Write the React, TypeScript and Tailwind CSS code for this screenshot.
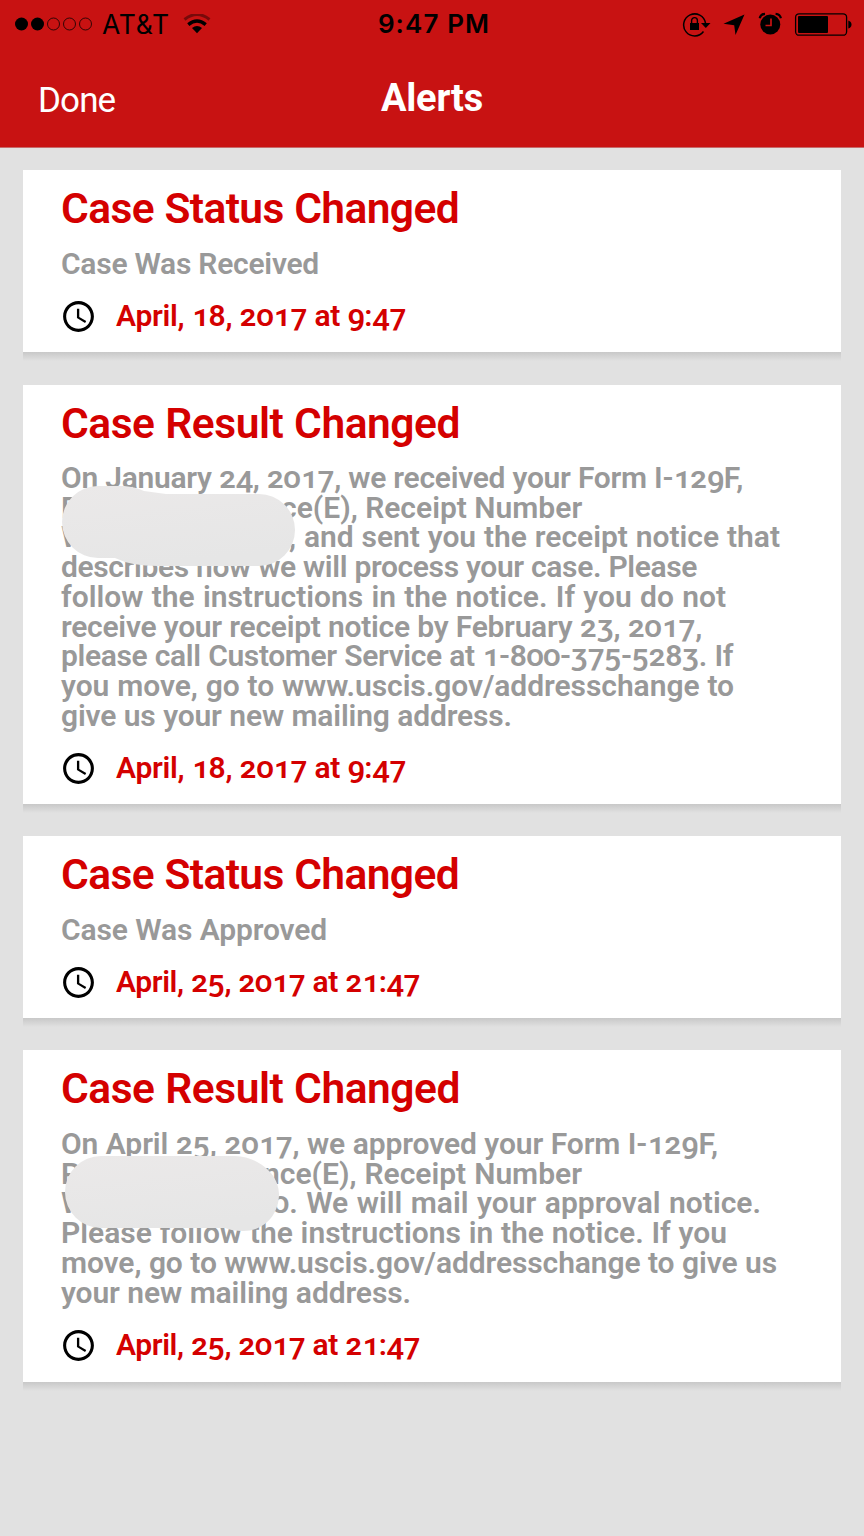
import { clsx } from "clsx";
import { MdAccessTime } from "react-icons/md";

/* ─── Types ─── */
interface Line {
  text: string;
  /** Width and tracking of the text run */
  fit: string;
  /** Letter left visible before the redacted part */
  lead?: string;
  /** Width of the whole line when part of it is redacted */
  full?: string;
}

interface Alert {
  title: string;
  titleFit: string;
  lines: Line[];
  date: string;
  dateFit: string;
  height: string;
  bodyGap: string;
  redaction?: "long" | "short";
}

/* ─── Data ─── */
const alerts: Alert[] = [
  {
    title: "Case Status Changed",
    titleFit: "w-[398px] tracking-[-0.6px]",
    lines: [{ text: "Case Was Received", fit: "w-[258px] tracking-[-0.25px]" }],
    date: "April, 18, 2017 at 9:47",
    dateFit: "w-[290px] tracking-[-0.27px]",
    height: "h-[182px]",
    bodyGap: "mt-[17.5px]",
  },
  {
    title: "Case Result Changed",
    titleFit: "w-[399px] tracking-[-0.45px]",
    lines: [
      { text: "On January 24, 2017, we received your Form I-129F,", fit: "w-[682px] tracking-[-0.28px]" },
      { lead: "P", text: "ce(E), Receipt Number", fit: "w-[301px]", full: "w-[521px]" },
      { lead: "W", text: ", and sent you the receipt notice that", fit: "w-[491px]", full: "w-[719px]" },
      { text: "describes how we will process your case. Please", fit: "w-[636px] tracking-[-0.38px]" },
      { text: "follow the instructions in the notice. If you do not", fit: "w-[665px]" },
      { text: "receive your receipt notice by February 23, 2017,", fit: "w-[641px] tracking-[-0.27px]" },
      { text: "please call Customer Service at 1-800-375-5283. If", fit: "w-[672px] tracking-[-0.36px]" },
      { text: "you move, go to www.uscis.gov/addresschange to", fit: "w-[673px] tracking-[-0.05px]" },
      { text: "give us your new mailing address.", fit: "w-[451px] tracking-[-0.15px]" },
    ],
    date: "April, 18, 2017 at 9:47",
    dateFit: "w-[290px] tracking-[-0.27px]",
    height: "h-[419px]",
    bodyGap: "mt-[17px]",
    redaction: "long",
  },
  {
    title: "Case Status Changed",
    titleFit: "w-[398px] tracking-[-0.6px]",
    lines: [{ text: "Case Was Approved", fit: "w-[266px] tracking-[-0.15px]" }],
    date: "April, 25, 2017 at 21:47",
    dateFit: "w-[304px] tracking-[-0.38px]",
    height: "h-[182px]",
    bodyGap: "mt-[17.5px]",
  },
  {
    title: "Case Result Changed",
    titleFit: "w-[399px] tracking-[-0.45px]",
    lines: [
      { text: "On April 25, 2017, we approved your Form I-129F,", fit: "w-[657px] tracking-[-0.1px]" },
      { lead: "P", text: "nce(E), Receipt Number", fit: "w-[319px]", full: "w-[521px]" },
      { lead: "W", text: "0. We will mail your approval notice.", fit: "w-[489px]", full: "w-[700px]" },
      { text: "Please follow the instructions in the notice. If you", fit: "w-[666px]" },
      { text: "move, go to www.uscis.gov/addresschange to give us", fit: "w-[716px] tracking-[-0.1px]" },
      { text: "your new mailing address.", fit: "w-[350px] tracking-[-0.1px]" },
    ],
    date: "April, 25, 2017 at 21:47",
    dateFit: "w-[304px] tracking-[-0.38px]",
    height: "h-[332px]",
    bodyGap: "mt-[18px]",
    redaction: "short",
  },
];

const spread = "block whitespace-nowrap [text-align-last:justify]";

/* ─── Status bar ─── */
function StatusBar() {
  return (
    <div className="flex h-12 items-center text-black font-['Inter',sans-serif]">
      <div className="flex w-[364px] items-center pl-[15px]">
        <svg width="78" height="14" viewBox="0 0 78 14">
          <circle cx="6.5" cy="7" r="6.5" />
          <circle cx="22.5" cy="7" r="6.5" />
          <g fill="none" stroke="#000" strokeOpacity="0.75" strokeWidth="1">
            <circle cx="38.5" cy="7" r="6" />
            <circle cx="54.5" cy="7" r="6" />
            <circle cx="70.5" cy="7" r="6" />
          </g>
        </svg>
        <span className="ml-[9px] w-[68px] text-[26.5px] leading-none tracking-[0.7px]">AT&amp;T</span>
        <svg className="ml-[13px]" width="28" height="20" viewBox="0 0 28 20">
          <path d="M1.5 5.5Q14-4.5 26.5 5.5" fill="none" stroke="#000" strokeOpacity="0.4" strokeWidth="3" />
          <path d="M5.3 10.6Q14 3.4 22.7 10.6" fill="none" stroke="#000" strokeWidth="3.4" />
          <path d="M9 14Q14 9.8 19 14L14 19.3Z" />
        </svg>
      </div>
      <div className="w-[140px] text-center text-[26px] leading-none font-semibold tracking-[1.1px] whitespace-nowrap">
        9:47 PM
      </div>
      <div className="flex flex-1 justify-end pr-[12px]">
        <svg width="170" height="26" viewBox="682 10 170 26">
          {/* rotation lock */}
          <path d="M703.5 30.5A11 11 0 1 1 705.5 22" fill="none" stroke="#000" strokeWidth="1.5" />
          <path d="M701 22H710.5L705.8 27Z" />
          <rect x="690" y="22" width="9" height="7" />
          <path d="M691.6 22V19.5a2.9 2.9 0 0 1 5.8 0V22" fill="none" stroke="#000" strokeWidth="1.4" />
          {/* location */}
          <path d="M744.5 13.5L735.5 34L734.2 24.2L723.5 22.8Z" />
          {/* alarm */}
          <circle cx="770.3" cy="23.5" r="10" />
          <path d="M759.7 17.2Q760.5 13.2 765 12.8M780.9 17.2Q780.1 13.2 775.6 12.8" fill="none" stroke="#000" strokeWidth="2.2" />
          <path d="M771 17.5V24.5H765.5" fill="none" stroke="#c81212" strokeWidth="1.7" />
          {/* battery */}
          <rect x="795.6" y="12.8" width="51" height="21.4" rx="3.5" fill="none" stroke="#000" strokeWidth="1.3" />
          <rect x="798" y="15" width="30" height="17" rx="1" />
          <path d="M848.3 19.5Q851.5 20.5 851.5 23.5T848.3 27.5Z" />
        </svg>
      </div>
    </div>
  );
}

/* ─── Brush marks over the private details ─── */
function Redaction({ kind }: { kind: "long" | "short" }) {
  const long = kind === "long";
  return (
    <svg
      className={clsx("absolute", long ? "top-[23px] left-px" : "top-[27px] left-[4px]")}
      width="234"
      height="80"
      viewBox="0 0 234 80"
    >
      <defs>
        <linearGradient id={`brush-${kind}`} x1="0" y1="0" x2="0.3" y2="1">
          <stop offset="0" stopColor="#ebe9e9" />
          <stop offset="1" stopColor="#e6e6e6" />
        </linearGradient>
      </defs>
      <path
        fill={`url(#brush-${kind})`}
        d={
          long
            ? "M36 0H62Q74 1 82 5L104 8H197A36 36 0 0 1 197 80H96Q69 80 53 72H36A36 36 0 0 1 36 0Z"
            : "M36 0H170C194 1 214 18 214 38C214 58 200 75 178 75Q167 75 160 72H36A36 36 0 0 1 36 0Z"
        }
      />
    </svg>
  );
}

/* ─── Single alert card ─── */
function AlertCard({ alert }: { alert: Alert }) {
  return (
    <article
      className={clsx(
        "relative bg-white pt-[15.5px] pl-[38px] after:absolute after:top-full after:right-0 after:left-0 after:h-[9px] after:bg-linear-to-b after:from-[#c8c8c8] after:to-[#e1e1e1]",
        alert.height,
      )}
    >
      <h2 className="h-[45.5px] text-[42.5px] leading-[46px] font-semibold text-[#d40000]">
        <span className={clsx(spread, alert.titleFit)}>{alert.title}</span>
      </h2>

      <div className={clsx("relative text-[30px] leading-[29.7px] font-semibold text-[#999]", alert.bodyGap)}>
        {alert.lines.map((line) =>
          line.lead ? (
            <div key={line.text} className={clsx("flex justify-between", line.full)}>
              <span>{line.lead}</span>
              <span className={clsx(spread, line.fit)}>{line.text}</span>
            </div>
          ) : (
            <span key={line.text} className={clsx(spread, line.fit)}>
              {line.text}
            </span>
          ),
        )}
        {alert.redaction && <Redaction kind={alert.redaction} />}
      </div>

      <div className="mt-[22px] flex h-8 items-center text-[30px] leading-8 font-semibold text-[#d40000]">
        <MdAccessTime size={37} className="mt-px -ml-px shrink-0 text-black" />
        <span className={clsx(spread, "ml-[19px]", alert.dateFit)}>{alert.date}</span>
      </div>
    </article>
  );
}

/* ─── Screen ─── */
export default function App() {
  return (
    <div className="h-[1536px] w-[864px] overflow-hidden bg-[#e1e1e1] font-['Roboto',sans-serif] oldstyle-nums">
      <header className="h-[148px] border-b border-[#c76a6a] bg-[#c81212]">
        <StatusBar />
        <div className="grid h-[99px] grid-cols-3 items-center px-[38px] text-white">
          <span className="pt-[5px] text-[35px] leading-none tracking-[-0.9px]">Done</span>
          <h1 className="pt-px text-center text-[38px] leading-none font-bold tracking-[-0.2px]">Alerts</h1>
        </div>
      </header>

      <main className="flex flex-col gap-8 px-[23px] pt-[22px] [&>:first-child]:mb-px">
        {alerts.map((alert, i) => (
          <AlertCard key={i} alert={alert} />
        ))}
      </main>
    </div>
  );
}
